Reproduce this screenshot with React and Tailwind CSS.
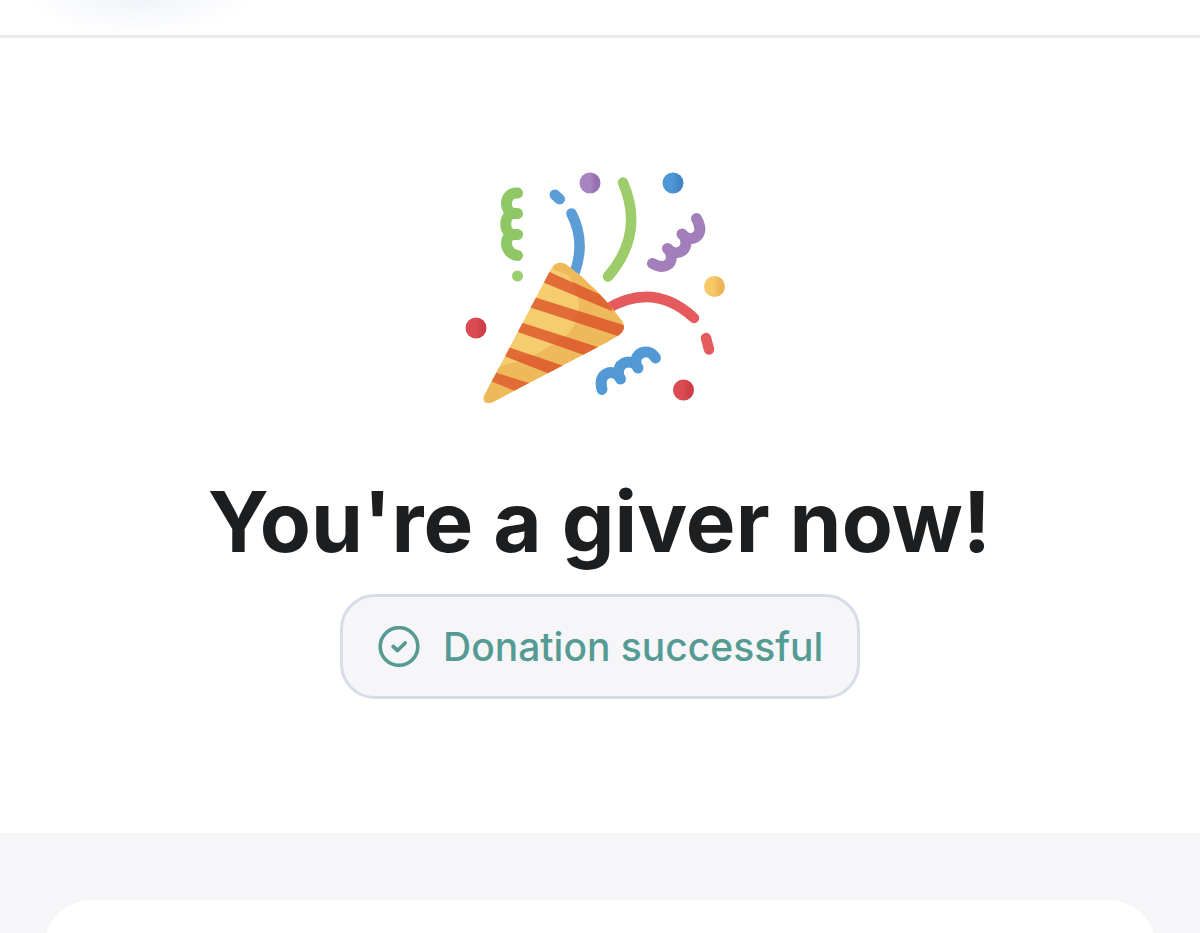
import React from 'react';

const stripes = [
  'M545 270L610 299L612 311L540 281Z',
  'M534 297L630 327L624 338L529 307Z',
  'M520 322L602 348.5L590 357L515 331Z',
  'M508 347L568 367.5L555 376L502 355Z',
  'M494 372L534 384.5L520 393L488 380Z',
];

function PartyPopper() {
  return (
    <svg className="h-[260px] w-[290px]" viewBox="450 160 290 260" fill="none" strokeLinecap="round" strokeLinejoin="round" aria-hidden="true">
      <defs>
        <clipPath id="cone">
          <path d="M484 396L551 269Q557 259 567 265Q598 288 622 321Q627 329 619 335Q608 342 594 349L492 402.500Q482 405 484 396Z" />
        </clipPath>
        <linearGradient id="purple"><stop offset="0.5" stopColor="#a884c2" /><stop offset="0.75" stopColor="#9571b2" /></linearGradient>
        <linearGradient id="blue"><stop offset="0.45" stopColor="#4e97d5" /><stop offset="0.8" stopColor="#4187c8" /></linearGradient>
        <linearGradient id="yellow"><stop offset="0.45" stopColor="#f6c866" /><stop offset="0.75" stopColor="#edb557" /></linearGradient>
        <linearGradient id="red"><stop offset="0.45" stopColor="#dc4b52" /><stop offset="0.8" stopColor="#cf3e48" /></linearGradient>
      </defs>
      <g strokeWidth="10.500">
        <path stroke="#9dcc6b" d="M623 182.500Q645 234 608 276.500" />
        <path stroke="#e55b5d" d="M607 309Q654 281 694 318M706 338L709 349.500" />
        <path stroke="#5c9dd7" d="M571.500 213.500Q586 242 574.500 273" />
        <path stroke="#5c9dd7" strokeWidth="11" d="M555 195L559.500 199" />
      </g>
      <path stroke="#8fc765" strokeWidth="11" d="M517.500 193C504 192 503 212 514 213.500C503 213.500 503 234.500 514 234.500C503 234.500 504 254 517.500 255.500M514 213.500H517.500M514 234.500H517.500" />
      <path stroke="#a27fbb" strokeWidth="11" d="M696.500 218.500C706 236 692 242 684.500 236.500C690 250 678 256 670 251C675 265 664 270 652.500 263.500M684.500 236.500L682 234M670 251L667.500 248.500" />
      <path stroke="#5399d5" strokeWidth="11" d="M602 389.500C598 373 611 369 618.500 375.500C617 363 628 359 636 364.500C634 352 649 347 655.500 358M618.500 375.500L620.500 379M636 364.500L638 368" />
      <g clipPath="url(#cone)">
        <path fill="#f6cd6e" d="M470 250H640V420H470Z" />
        <path fill="#edb95a" d="M550 258H640V420H470V382Q487 370 507 364Q527 360 540 352Q560 341 568 334Q579 320 579 309Q580 291 568 275L554 270Z" />
        {stripes.map((d) => <path key={d} fill="#e26c37" d={d} />)}
        <path fill="#db6030" fillOpacity="0.5" d="M573 282L610 299L612 311L578 297ZM578 311L630 327L624 338L573 321ZM565 336.500L602 348.500L590 357L551 343ZM530 354.500L568 367.500L555 376L510 358Z" />
      </g>
      <circle cx="590" cy="183" r="10.500" fill="url(#purple)" />
      <circle cx="673" cy="183" r="10.500" fill="url(#blue)" />
      <circle cx="714.500" cy="286.500" r="10.500" fill="url(#yellow)" />
      <circle cx="476" cy="328" r="10.500" fill="url(#red)" />
      <circle cx="683.500" cy="390" r="10.500" fill="url(#red)" />
      <circle cx="517.500" cy="276" r="5.500" fill="#9bcf72" />
    </svg>
  );
}

export default function App() {
  return (
    <div className="flex h-[933px] w-full flex-col overflow-hidden bg-white font-['Inter',sans-serif]">
      <header className="h-[38px] shrink-0 border-b-[3px] border-[#ebebed] bg-[radial-gradient(ellipse_115px_46px_at_138px_-10px,#eef1f8,#ffffff)]" />
      <main className="flex h-[795px] shrink-0 flex-col items-center pt-[122px]">
        <div className="ml-[-10px]">
          <PartyPopper />
        </div>
        <h1 className="mt-[52px] mr-[1px] whitespace-nowrap text-[83.500px] leading-[100px] font-bold tracking-[0.08px] text-[#1c1e20]">You're a giver now!</h1>
        <div className="mt-[22px] flex h-[105px] w-[520px] items-center rounded-[35px] border-[3px] border-[#d8dce8] bg-[#f6f6f9] pl-[35px] text-[#559b94]">
          <svg className="size-[42px] shrink-0" viewBox="0 0 42 42" fill="none" stroke="currentColor" strokeLinecap="round" strokeLinejoin="round" aria-hidden="true">
            <circle cx="21" cy="20.500" r="18.800" strokeWidth="3.600" />
            <path d="M15.200 20.500L19.500 24.500L27.200 17" strokeWidth="3.800" />
          </svg>
          <span className="ml-[23px] whitespace-nowrap text-[39px] leading-[48px] font-medium">Donation successful</span>
        </div>
      </main>
      <section className="flex h-[100px] shrink-0 flex-col bg-[#f6f6f9] px-[44px] pt-[67px]">
        <div className="h-[33px] overflow-hidden">
          <div className="h-[120px] rounded-[48px] bg-white" />
        </div>
      </section>
    </div>
  );
}
